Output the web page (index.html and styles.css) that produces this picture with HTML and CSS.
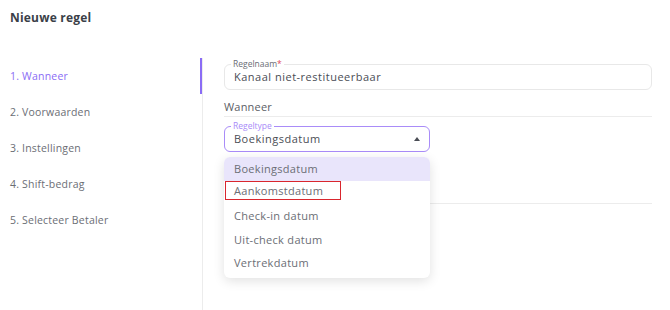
FILE: index.html
```html
<!DOCTYPE html>
<html lang="nl">
<head>
    <meta charset="UTF-8">
    <title>Nieuwe regel</title>
    <link rel="stylesheet" href="styles.css">
</head>
<body>
    <div class="page">
        <h1 class="title">Nieuwe regel</h1>

        <div class="layout">
            <ul class="steps">
                <li class="step active">1. Wanneer</li>
                <li class="step">2. Voorwaarden</li>
                <li class="step">3. Instellingen</li>
                <li class="step">4. Shift-bedrag</li>
                <li class="step">5. Selecteer Betaler</li>
            </ul>

            <div class="form">
                <div class="field">
                    <span class="field-label">Regelnaam<span class="req">*</span></span>
                    <div class="field-value">Kanaal niet-restitueerbaar</div>
                </div>

                <div class="section-title">Wanneer</div>

                <div class="select-wrap">
                    <div class="field select open">
                        <span class="field-label">Regeltype</span>
                        <div class="field-value">Boekingsdatum</div>
                        <span class="arrow"></span>
                    </div>

                    <ul class="menu">
                        <li class="menu-item selected">Boekingsdatum</li>
                        <li class="menu-item marked"><span>Aankomstdatum</span></li>
                        <li class="menu-item">Check-in datum</li>
                        <li class="menu-item">Uit-check datum</li>
                        <li class="menu-item">Vertrekdatum</li>
                    </ul>
                </div>

                <div class="spacer"></div>
            </div>
        </div>
    </div>
</body>
</html>
```

FILE: styles.css
```css
body {
    margin: 0;
    font-family: "Open Sans", Arial, sans-serif;
    background-color: #fff;
    color: #5b5e66;
}

.page {
    width: 670px;
    height: 310px;
    overflow: hidden;
}

.title {
    margin: 0;
    padding: 9px 10px 0;
    font-size: 12px;
    font-weight: 700;
    color: #3b3f48;
    height: 49px;
    line-height: 17px;
    letter-spacing: 0.2px;
}

.layout {
    display: flex;
    height: 252px;
}

.steps {
    list-style: none;
    margin: 0;
    padding: 0;
    width: 202px;
    border-right: 1px solid #ececec;
}

.step {
    height: 36px;
    line-height: 36px;
    padding-left: 10px;
    font-size: 10.5px;
    color: #6b6e75;
    letter-spacing: 0.2px;
}

.step.active {
    color: #8a6cf5;
    box-shadow: inset -2px 0 0 #8a6cf5;
}

.form {
    flex: 1;
    padding: 6px 18px 0 21px;
}

.field {
    position: relative;
    height: 24px;
    border: 1px solid #e8e8e8;
    border-radius: 6px;
    padding: 0 9px;
}

.field-label {
    position: absolute;
    top: -6px;
    left: 6px;
    padding: 0 2px;
    background-color: #fff;
    font-size: 8.5px;
    line-height: 10px;
    color: #6b6e75;
}

.req {
    color: #e0465a;
}

.field-value {
    font-size: 11px;
    line-height: 24px;
    color: #4a4d55;
    letter-spacing: 0.5px;
}

.section-title {
    margin-top: 8px;
    height: 18px;
    line-height: 18px;
    font-size: 11px;
    color: #5b5e66;
    border-bottom: 1px solid #ececec;
    letter-spacing: 0.2px;
}

.select-wrap {
    position: relative;
    margin-top: 9px;
    width: 206px;
}

.select.open {
    border-color: #a98cf8;
}

.select .field-label {
    color: #a98cf8;
}

.arrow {
    position: absolute;
    right: 9px;
    top: 10px;
    width: 0;
    height: 0;
    border-left: 3.5px solid transparent;
    border-right: 3.5px solid transparent;
    border-bottom: 4px solid #4a4d55;
}

.menu {
    position: absolute;
    top: 31px;
    left: 0;
    right: 0;
    z-index: 2;
    list-style: none;
    margin: 0;
    padding: 0 0 3px;
    background-color: #fff;
    border-radius: 6px;
    box-shadow: 0 3px 12px rgba(0, 0, 0, 0.12);
    overflow: hidden;
}

.menu-item {
    height: 23.5px;
    line-height: 23.5px;
    padding-left: 10px;
    font-size: 11px;
    color: #6b6e75;
    letter-spacing: 0.3px;
}

.menu-item.selected {
    background-color: #e9e5fb;
}

.menu-item.marked span {
    display: inline-block;
    margin-left: -9px;
    width: 106px;
    height: 17px;
    line-height: 17px;
    padding-left: 8px;
    border: 1.5px solid #d9262e;
    vertical-align: top;
    margin-top: 0;
}

.spacer {
    margin-top: 51px;
    border-bottom: 1px solid #ececec;
}
```
